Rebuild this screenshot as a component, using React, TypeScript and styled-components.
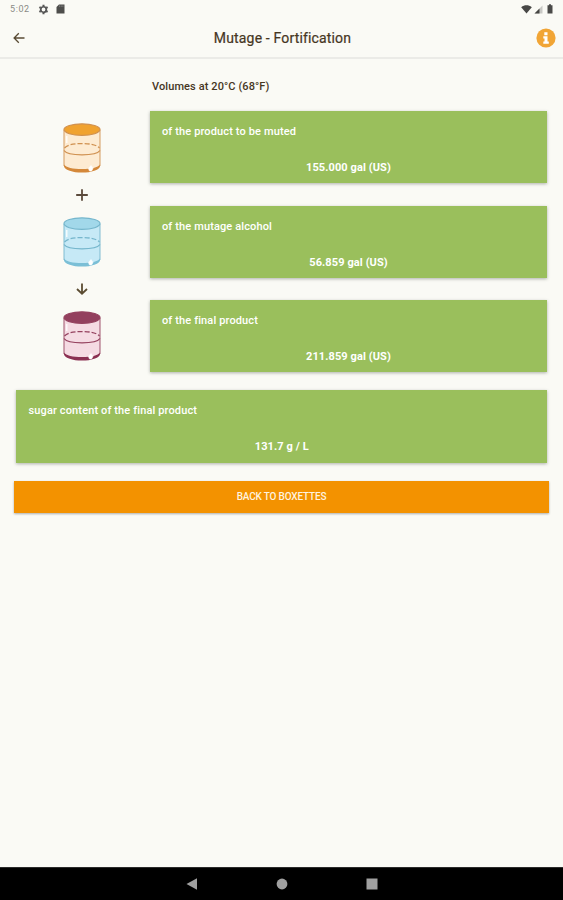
import React from "react";
import styled, { createGlobalStyle } from "styled-components";

const GlobalStyle = createGlobalStyle`
  * { box-sizing: border-box; }
  body { margin: 0; background: #fafaf5; }
`;

const Screen = styled.div`
  height: 900px;
  display: flex;
  flex-direction: column;
  background: #fafaf5;
  color: #46361f;
  font-family: Roboto, "Liberation Sans", sans-serif;
  overflow: hidden;
  white-space: nowrap;
`;

const StatusBar = styled.div`
  height: 18px;
  display: flex;
  justify-content: space-between;
  align-items: center;
  padding: 0 9px 0 10px;
`;

const StatusGroup = styled.div<{ $gap: number }>`
  display: flex;
  align-items: center;
  gap: ${(p) => p.$gap}px;
`;

const Clock = styled.span`
  width: 20px;
  margin-right: 1px;
  font-size: 9px;
  line-height: 18px;
  letter-spacing: 0.6px;
  color: #8a8a86;
`;

const Header = styled.header`
  height: 41px;
  display: grid;
  grid-template-columns: 40px 1fr 40px;
  align-items: center;
  padding: 0 7px 0 10px;
  border-bottom: 2px solid #ebebe7;

  & > :last-child { justify-self: end; }
`;

const Title = styled.h1`
  margin: 0;
  padding-top: 1px;
  padding-right: 1px;
  text-align: center;
  font-size: 14px;
  line-height: 18px;
  font-weight: 400;
  letter-spacing: 0.16px;
  -webkit-text-stroke: 0.2px #46361f;
`;

const IconButton = styled.button`
  display: flex;
  padding: 0;
  border: 0;
  background: none;
`;

const Content = styled.main`
  flex: 1;
  padding: 0 14px;
`;

const VolumesTitle = styled.h2`
  margin: 20px 0 16px 138px;
  font-size: 11px;
  line-height: 16px;
  font-weight: 500;
  letter-spacing: 0.1px;
`;

const Volumes = styled.section`
  display: grid;
  grid-template-columns: 131px 1fr;
  column-gap: 3px;
  padding: 0 2px;
`;

const Formula = styled.div`
  display: flex;
  flex-direction: column;
  align-items: center;
  padding: 11.5px 0 0;
`;

const Sign = styled.div`
  height: 44.2px;
  display: flex;
  align-items: center;
`;

const CardStack = styled.div`
  display: flex;
  flex-direction: column;
  gap: 22.1px;
  padding-top: 0.45px;
`;

const Card = styled.article<{ $tall?: boolean }>`
  height: ${(p) => (p.$tall ? 73 : 72)}px;
  padding: 13px 12px 0 ${(p) => (p.$tall ? 12.5 : 12)}px;
  background: #9abf5c;
  color: #fff;
  box-shadow: 0 1px 3px rgba(60, 70, 60, 0.4);
`;

const CardLabel = styled.div`
  font-size: 11px;
  line-height: 16px;
  font-weight: 500;
  letter-spacing: 0.13px;
`;

const CardValue = styled.div`
  margin-top: 20px;
  text-align: center;
  font-size: 11px;
  line-height: 16px;
  font-weight: 700;
  letter-spacing: 0.1px;
`;

const SugarSlot = styled.section`
  padding: 18.6px 2px 18px;
`;

const BackButton = styled.button`
  display: block;
  width: 100%;
  height: 32px;
  padding: 0;
  border: 0;
  background: #f39200;
  color: #fff3df;
  box-shadow: 0 1px 2px rgba(60, 60, 60, 0.4);
  font: 500 10px/32px Roboto, "Liberation Sans", sans-serif;
  letter-spacing: -0.18px;
`;

const NavBar = styled.nav`
  height: 33px;
  display: flex;
  justify-content: center;
  align-items: center;
  gap: 78px;
  background: #000;
  border-top: 1px solid #2b2b2b;
`;

type CylinderProps = { line: string; top: string; fill: string; base: string };

const Cylinder = ({ line, top, fill, base }: CylinderProps) => (
  <svg width="38" height="50" viewBox="0 0 38 50" fill="none">
    <path d="M1 7v36c0 3.300 8 6 18 6s18-2.700 18-6V7z" fill={fill} />
    <path d="M1 41.500c2 3 9 4.600 18 4.600S35 44.500 37 41.500v2C36 47 28.500 49.600 19 49.600S2 47 1 43.500z" fill={base} />
    <path d="M1 7v36M37 7v36" stroke={line} strokeWidth="1.200" opacity=".75" />
    <path d="M1 27.500c2 3 9 4.300 18 4.300s16-1.300 18-4.300" stroke={line} strokeWidth="1.300" />
    <path d="M1.500 25C5 21.500 11 20.600 19 20.600S33 21.500 36.500 25" stroke={line} strokeWidth="1.300" strokeDasharray="5 2" />
    <ellipse cx="19" cy="6.600" rx="18" ry="5.800" fill={top} stroke={line} strokeWidth="1.200" />
    <path d="M3.800 13v7" stroke="#fff" strokeWidth="1.200" />
    <path d="M25.500 45.500l2.500-3 2 3-1.500 2.500h-2z" fill="#fff" stroke="#fff" strokeWidth=".600" />
  </svg>
);

const BackIcon = () => (
  <svg width="16" height="16" viewBox="0 0 16 16" fill="none" stroke="#594b34" strokeWidth="1.300">
    <path d="M14.500 8H4M8.800 3.300L4.100 8l4.700 4.700" />
  </svg>
);

const InfoIcon = () => (
  <svg width="20" height="20" viewBox="0 0 20 20">
    <circle cx="10" cy="10" r="9.600" fill="#f1a535" />
    <path d="M8.300 4.300h3.200v2.900H8.300zM7.300 8.200h4.200v5.300h1.300v2.200H7.300v-2.200h1.200v-3.100H7.300z" fill="#fff" />
  </svg>
);

const PlusIcon = () => (
  <svg width="14" height="14" viewBox="0 0 14 14" fill="none" stroke="#5b4a3c" strokeWidth="1.800">
    <path d="M7 1.200v11.600M1.200 7h11.600" />
  </svg>
);

const DownIcon = () => (
  <svg width="14" height="14" viewBox="0 0 14 14" fill="none" stroke="#5b4c32" strokeWidth="1.800">
    <path d="M7 1.500v10M2 7l5 4.700L12 7" />
  </svg>
);

const GearIcon = () => (
  <svg width="11" height="11" viewBox="0 0 12 12" fill="none" stroke="#555">
    <circle cx="6" cy="6" r="3" strokeWidth="1.900" />
    <path d="M6 .800v1.700M6 9.500v1.700M1.500 3.400l1.500.900M9 7.700l1.500.900M1.500 8.600L3 7.700M9 4.300l1.500-.900" strokeWidth="2.200" />
  </svg>
);

const CardIcon = () => (
  <svg width="9" height="10" viewBox="0 0 9 10">
    <path d="M3 .500h5.500v9h-8V3z" fill="#4d4d4b" />
    <path d="M3.500 1.500v1.300M5.200 1.500v1.300M6.900 1.500v1.300" stroke="#999" strokeWidth=".700" />
  </svg>
);

const WifiIcon = () => (
  <svg width="11" height="9" viewBox="0 0 11 9">
    <path d="M.200 2.200C3.500-.300 7.500-.300 10.800 2.200L5.500 8.500z" fill="#484846" />
  </svg>
);

const SignalIcon = () => (
  <svg width="9" height="9" viewBox="0 0 9 9">
    <path d="M.500 8.500l8-8v8z" fill="#c9c9c5" />
    <path d="M.500 8.500L5.500 3.500v5z" fill="#454543" />
  </svg>
);

const BatteryIcon = () => (
  <svg width="6" height="10" viewBox="0 0 6 10">
    <path d="M2 .300h2v1h1.500v8.200h-5V1.300H2z" fill="#4a4a48" />
  </svg>
);

const BatterySlot = styled.span`
  display: flex;
  padding: 0 1px 0 2px;
`;

const volumes = [
  { label: "of the product to be muted", value: "155.000 gal (US)" },
  { label: "of the mutage alcohol", value: "56.859 gal (US)" },
  { label: "of the final product", value: "211.859 gal (US)" },
];

export default function App() {
  return (
    <Screen>
      <GlobalStyle />
      <StatusBar>
        <StatusGroup $gap={7}>
          <Clock>5:02</Clock>
          <GearIcon />
          <CardIcon />
        </StatusGroup>
        <StatusGroup $gap={2}>
          <WifiIcon />
          <SignalIcon />
          <BatterySlot><BatteryIcon /></BatterySlot>
        </StatusGroup>
      </StatusBar>
      <Header>
        <IconButton aria-label="Back"><BackIcon /></IconButton>
        <Title>Mutage - Fortification</Title>
        <IconButton aria-label="Information"><InfoIcon /></IconButton>
      </Header>
      <Content>
        <VolumesTitle>Volumes at 20°C (68°F)</VolumesTitle>
        <Volumes>
          <Formula>
            <Cylinder line="#d09150" top="#f0a22f" fill="#fdebd2" base="#d4883a" />
            <Sign><PlusIcon /></Sign>
            <Cylinder line="#75b6cc" top="#a2d8ea" fill="#c6e9f6" base="#7bbfd6" />
            <Sign><DownIcon /></Sign>
            <Cylinder line="#95425f" top="#93405e" fill="#f5dbe3" base="#8b3052" />
          </Formula>
          <CardStack>
            {volumes.map((v) => (
              <Card key={v.label}>
                <CardLabel>{v.label}</CardLabel>
                <CardValue>{v.value}</CardValue>
              </Card>
            ))}
          </CardStack>
        </Volumes>
        <SugarSlot>
          <Card $tall>
            <CardLabel>sugar content of the final product</CardLabel>
            <CardValue>131.7 g / L</CardValue>
          </Card>
        </SugarSlot>
        <BackButton>BACK TO BOXETTES</BackButton>
      </Content>
      <NavBar>
        <svg width="12" height="12" viewBox="0 0 12 12"><path d="M.500 6L11 .300v11.400z" fill="#a0a0a0" /></svg>
        <svg width="12" height="12" viewBox="0 0 12 12"><circle cx="6" cy="6" r="5.400" fill="#a0a0a0" /></svg>
        <svg width="12" height="12" viewBox="0 0 12 12"><path d="M.500.500h11v11H.500z" fill="#a0a0a0" /></svg>
      </NavBar>
    </Screen>
  );
}
